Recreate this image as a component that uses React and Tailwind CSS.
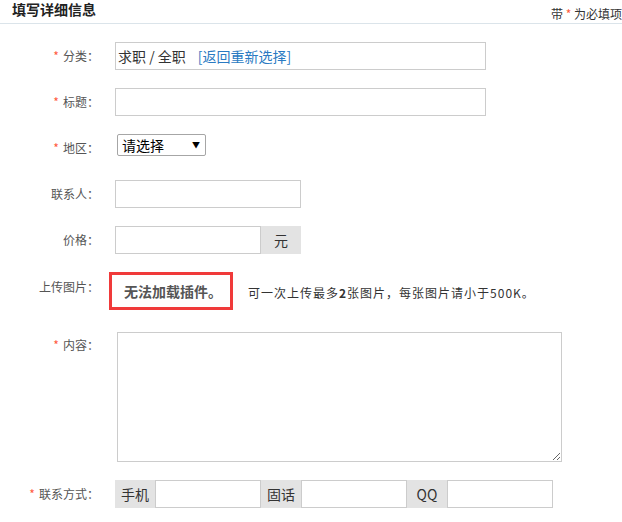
import React from "react";

const font = { fontFamily: '"Noto Sans CJK SC", "Noto Sans", sans-serif' };

function Label({ required, children, className = "" }) {
  return (
    <div className={`w-[99px] shrink-0 text-right text-[12px] leading-[16px] text-[#555] ${className}`}>
      {required && <span className="text-[#ff5a3c] mr-[4px]">*</span>}
      {children}：
    </div>
  );
}

function Addon({ children, className = "" }) {
  return (
    <div className={`h-[28px] bg-[#e3e3e3] text-[14px] text-[#333] flex items-center justify-center ${className}`}>
      {children}
    </div>
  );
}

export default function App() {
  return (
    <div className="w-[622px] h-[522px] overflow-hidden bg-white text-[#333]" style={font}>
      {/* 标题栏 */}
      <div className="w-[622px] h-[24px] border-b border-[#dbe4ea] flex justify-between">
        <div className="pl-[12px] text-[14px] leading-[18px] font-bold text-[#222]">填写详细信息</div>
        <div className="pt-[6px] text-[12px] leading-[16px] text-[#333] whitespace-nowrap">
          带 <span className="text-[#ff5a3c]">*</span> 为必填项
        </div>
      </div>

      {/* 分类 */}
      <div className="flex items-center h-[28px] mt-[18px]">
        <Label required>分类</Label>
        <div className="ml-[16px] w-[371px] h-[28px] border border-[#ccc] flex items-center pl-[2px] text-[14px] whitespace-nowrap">
          <span className="text-[#333]">求职 / 全职</span>
          <span className="ml-[12px] text-[#2a7ac2]">[返回重新选择]</span>
        </div>
      </div>

      {/* 标题 */}
      <div className="flex items-center h-[28px] mt-[18px]">
        <Label required>标题</Label>
        <div className="ml-[16px] w-[371px] h-[28px] border border-[#ccc]" />
      </div>

      {/* 地区 */}
      <div className="flex items-center h-[28px] mt-[18px]">
        <Label required>地区</Label>
        <div className="self-start ml-[18px] w-[89px] h-[22px] border border-[#a6a6a6] rounded-[2px] flex items-center justify-between pl-[4px] pr-[5px] text-[14px] text-black">
          <span>请选择</span>
          <span className="text-[8px]">▼</span>
        </div>
      </div>

      {/* 联系人 */}
      <div className="flex items-center h-[28px] mt-[18px]">
        <Label>联系人</Label>
        <div className="ml-[16px] w-[186px] h-[28px] border border-[#ccc]" />
      </div>

      {/* 价格 */}
      <div className="flex items-center h-[28px] mt-[18px]">
        <Label>价格</Label>
        <div className="ml-[16px] flex">
          <div className="w-[146px] h-[28px] border border-[#ccc]" />
          <Addon className="w-[40px]">元</Addon>
        </div>
      </div>

      {/* 上传图片 */}
      <div className="flex items-start h-[38px] mt-[18px]">
        <Label className="mt-[7px]">上传图片</Label>
        <div className="ml-[10px] w-[124px] h-[38px] border-[3px] border-[#f03a3a] flex items-center pl-[12px] text-[14px] font-bold text-[#555] whitespace-nowrap">
          无法加载插件。
        </div>
        <div className="ml-[15px] mt-[13px] text-[12px] leading-[16px] tracking-[1px] text-[#333] whitespace-nowrap">
          可一次上传最多<b>2</b>张图片，每张图片请小于500K。
        </div>
      </div>

      {/* 内容 */}
      <div className="flex items-start mt-[22px]">
        <Label required className="mt-[5px]">内容</Label>
        <textarea className="ml-[18px] w-[445px] h-[130px] border border-[#ccc] outline-none resize" />
      </div>

      {/* 联系方式 */}
      <div className="flex items-center h-[28px] mt-[18px]">
        <Label required>联系方式</Label>
        <div className="ml-[16px] flex">
          <Addon className="w-[40px]">手机</Addon>
          <div className="w-[106px] h-[28px] border border-[#ccc]" />
          <Addon className="w-[40px]">固话</Addon>
          <div className="w-[106px] h-[28px] border border-[#ccc]" />
          <Addon className="w-[40px]">QQ</Addon>
          <div className="w-[106px] h-[28px] border border-[#ccc]" />
        </div>
      </div>
    </div>
  );
}
